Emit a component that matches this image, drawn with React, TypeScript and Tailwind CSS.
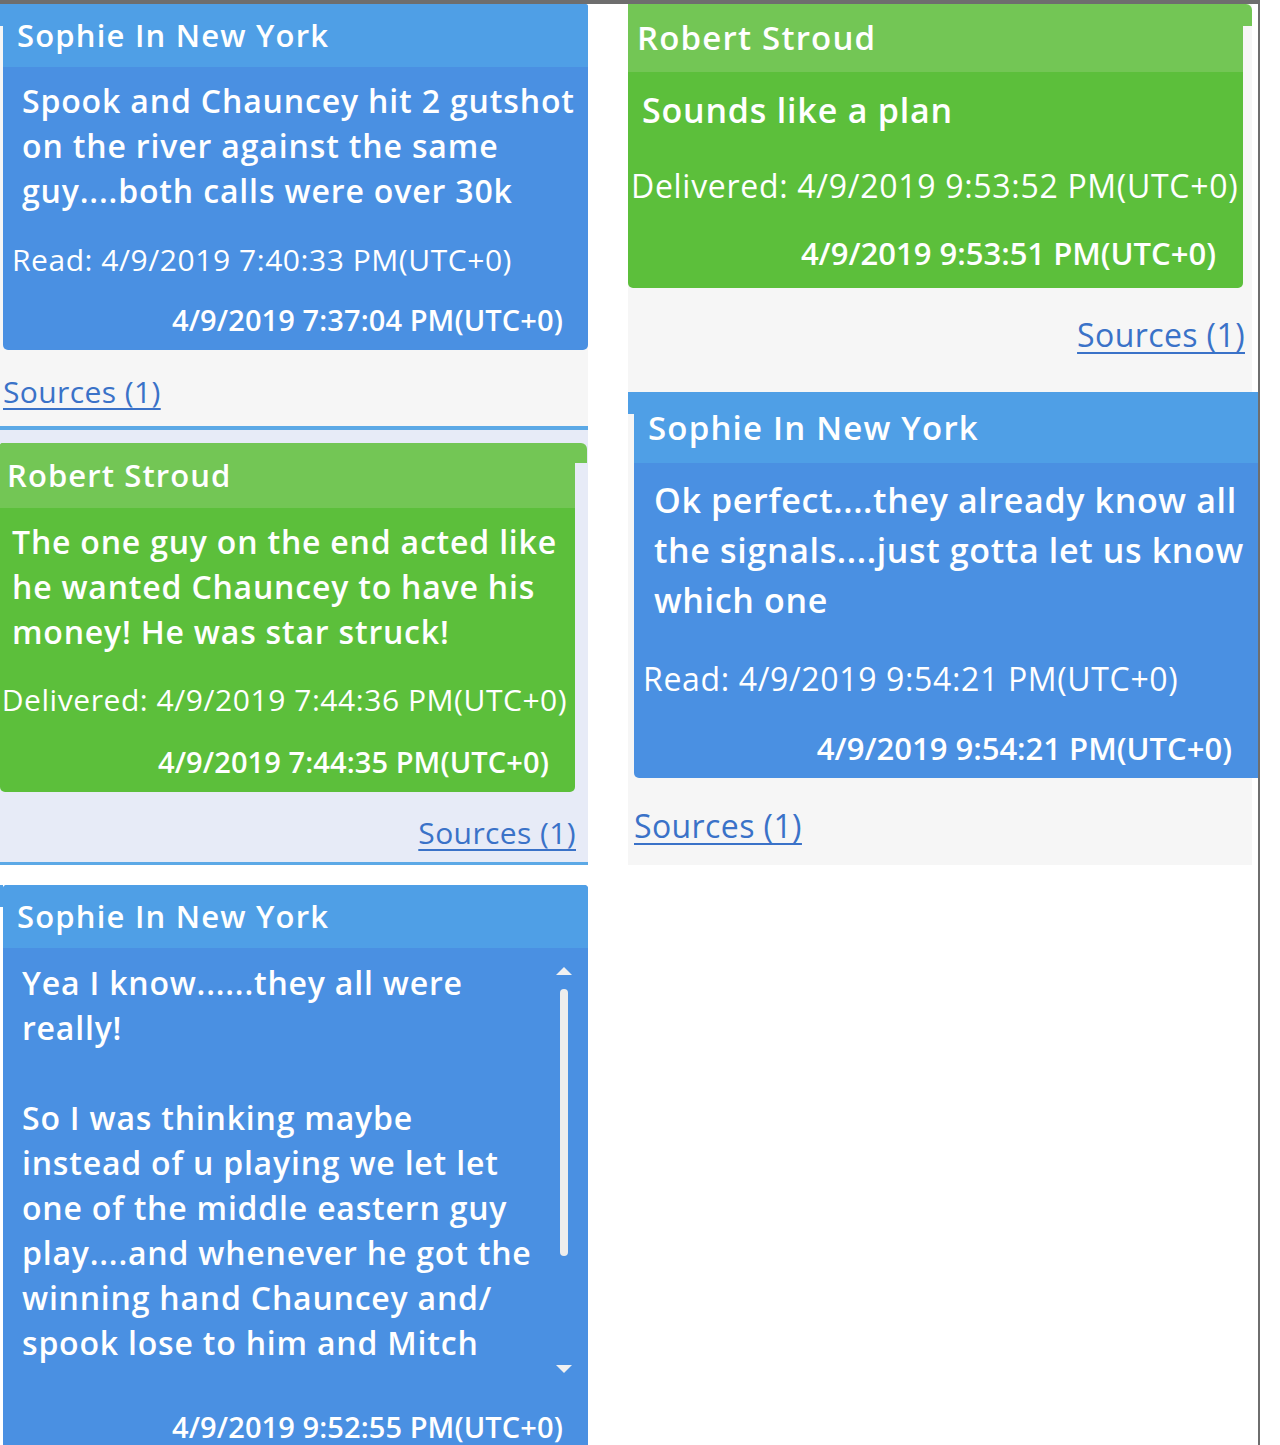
import React from "react";

const font = { fontFamily: "'Open Sans', 'Noto Sans', sans-serif" };

function Lines({ lines }: { lines: string[] }) {
  return (
    <>
      {lines.map((l, i) => (
        <div key={i} className="whitespace-nowrap">{l === "" ? "\u00a0" : l}</div>
      ))}
    </>
  );
}

function Sources({ className }: { className: string }) {
  return (
    <div className={className}>
      <span className="underline decoration-[2px] underline-offset-[5px] text-[#3a72c8]">Sources (1)</span>
    </div>
  );
}

function ScrollBar() {
  return (
    <div className="w-[16px] mr-[16px] flex flex-col items-center pt-[18px] pb-[14px]">
      <svg width="18" height="10" viewBox="0 0 18 10"><path d="M1 9 L9 1 L17 9 Z" fill="#f1f1f1" /></svg>
      <div className="mt-[13px] w-[8px] h-[267px] rounded-full bg-[#ededed]" />
      <div className="flex-1" />
      <svg width="18" height="10" viewBox="0 0 18 10"><path d="M1 1 L9 9 L17 1 Z" fill="#f1f1f1" /></svg>
    </div>
  );
}

export default function App() {
  return (
    <div className="w-[1260px] h-[1445px] bg-white border-t-4 border-r-2 border-[#6e6e6e] overflow-hidden text-white" style={font}>
      <div className="flex gap-[40px]">
        {/* Left column */}
        <div className="w-[588px] flex flex-col">
          {/* Row 1: incoming */}
          <div className="bg-[#f6f6f6] h-[422px] flex flex-col">
            <div className="flex">
              <div className="w-[3px] h-[22px] bg-[#4f9fe6]" />
              <div className="flex-1 rounded-b-[5px] rounded-tr-[3px] overflow-hidden bg-[#4a90e2] h-[346px] flex flex-col">
                <div className="h-[63px] bg-[#4f9fe6] pl-[14px] flex items-center text-[31px] font-semibold tracking-[1.2px]">Sophie In New York</div>
                <div className="pl-[19px] pt-[11px] text-[32px] leading-[45px] font-semibold tracking-[0.85px]">
                  <Lines lines={["Spook and Chauncey hit 2 gutshot", "on the river against the same", "guy....both calls were over 30k"]} />
                </div>
                <div className="pl-[9px] mt-[27px] whitespace-nowrap text-[30px] leading-[40px] tracking-[0.55px]">Read: 4/9/2019 7:40:33 PM(UTC+0)</div>
                <div className="pr-[25px] mt-[20px] text-right text-[29px] leading-[40px] font-semibold tracking-[0.1px]">4/9/2019 7:37:04 PM(UTC+0)</div>
              </div>
            </div>
            <Sources className="pl-[3px] mt-[21px] text-[30px] leading-[42px] tracking-[0.4px]" />
          </div>
          <div className="h-[4px] bg-[#5ca9e6]" />

          {/* Row 2: outgoing */}
          <div className="bg-[#e7ebf7] h-[432px] pt-[13px] flex flex-col">
            <div className="flex">
              <div className="w-[575px] rounded-b-[5px] rounded-tl-[3px] overflow-hidden bg-[#5cbf3b] h-[349px] flex flex-col">
                <div className="h-[65px] bg-[#73c655] pl-[7px] flex items-center text-[31px] font-semibold tracking-[1.1px]">Robert Stroud</div>
                <div className="pl-[12px] pt-[11px] text-[32px] leading-[45px] font-semibold tracking-[0.8px]">
                  <Lines lines={["The one guy on the end acted like", "he wanted Chauncey to have his", "money! He was star struck!"]} />
                </div>
                <div className="pr-[6px] mt-[26px] text-center whitespace-nowrap text-[30px] leading-[40px] tracking-[0.55px]">Delivered: 4/9/2019 7:44:36 PM(UTC+0)</div>
                <div className="pr-[26px] mt-[22px] text-right text-[29px] leading-[40px] font-semibold tracking-[0.1px]">4/9/2019 7:44:35 PM(UTC+0)</div>
              </div>
              <div className="w-[12px] h-[20px] bg-[#73c655] rounded-tr-[6px]" />
            </div>
            <Sources className="w-[576px] text-right mt-[20px] text-[30px] leading-[42px] tracking-[0.4px]" />
          </div>
          <div className="h-[3px] bg-[#5ca9e6]" />

          {/* Row 3: incoming, scrolling */}
          <div className="pt-[20px]">
            <div className="flex">
              <div className="w-[3px] h-[22px] bg-[#4f9fe6]" />
              <div className="flex-1 rounded-t-[4px] overflow-hidden bg-[#4a90e2] h-[600px] flex flex-col">
                <div className="h-[63px] bg-[#4f9fe6] pl-[14px] flex items-center text-[31px] font-semibold tracking-[1.2px]">Sophie In New York</div>
                <div className="flex h-[440px]">
                  <div className="flex-1 pl-[19px] pt-[12px] text-[32px] leading-[45px] font-semibold tracking-[0.8px]">
                    <Lines
                      lines={[
                        "Yea I know......they all were",
                        "really!",
                        "",
                        "So I was thinking maybe",
                        "instead of u playing we let let",
                        "one of the middle eastern guy",
                        "play....and whenever he got the",
                        "winning hand Chauncey and/",
                        "spook lose to him and Mitch",
                      ]}
                    />
                  </div>
                  <ScrollBar />
                </div>
                <div className="pr-[25px] mt-[19px] text-right text-[29px] leading-[40px] font-semibold tracking-[0.1px]">4/9/2019 9:52:55 PM(UTC+0)</div>
              </div>
            </div>
          </div>
        </div>

        {/* Right column */}
        <div className="w-[630px] flex flex-col">
          {/* Row 1: outgoing */}
          <div className="bg-[#f6f6f6] h-[388px] mr-[6px] flex flex-col">
            <div className="flex">
              <div className="w-[617px] rounded-b-[5px] overflow-hidden bg-[#5cbf3b] h-[284px] flex flex-col">
                <div className="h-[68px] bg-[#73c655] pl-[9px] flex items-center text-[33px] font-semibold tracking-[1.2px]">Robert Stroud</div>
                <div className="pl-[14px] pt-[14px] text-[34px] leading-[48px] font-semibold tracking-[0.8px]">Sounds like a plan</div>
                <div className="pl-[3px] mt-[31px] whitespace-nowrap text-[32px] leading-[42px] tracking-[0.7px]">Delivered: 4/9/2019 9:53:52 PM(UTC+0)</div>
                <div className="pr-[27px] mt-[25px] text-right text-[31px] leading-[42px] font-semibold">4/9/2019 9:53:51 PM(UTC+0)</div>
              </div>
              <div className="w-[9px] h-[22px] bg-[#73c655] rounded-tr-[6px]" />
            </div>
            <Sources className="w-[617px] text-right mt-[25px] text-[32px] leading-[44px] tracking-[0.4px]" />
          </div>

          {/* Row 2: incoming */}
          <div className="bg-[#f6f6f6] h-[473px] mr-[6px] flex flex-col">
            <div className="flex -mr-[6px]">
              <div className="w-[6px] h-[22px] bg-[#4f9fe6]" />
              <div className="flex-1 rounded-bl-[5px] overflow-hidden bg-[#4a90e2] h-[386px] flex flex-col">
                <div className="h-[71px] bg-[#4f9fe6] pl-[14px] flex items-center text-[33px] font-semibold tracking-[1.2px]">Sophie In New York</div>
                <div className="pl-[20px] pt-[12px] text-[34px] leading-[50px] font-semibold tracking-[0.65px]">
                  <Lines lines={["Ok perfect....they already know all", "the signals....just gotta let us know", "which one"]} />
                </div>
                <div className="pl-[9px] mt-[33px] whitespace-nowrap text-[32px] leading-[42px] tracking-[0.65px]">Read: 4/9/2019 9:54:21 PM(UTC+0)</div>
                <div className="pr-[26px] mt-[27px] text-right text-[31px] leading-[42px] font-semibold">4/9/2019 9:54:21 PM(UTC+0)</div>
              </div>
            </div>
            <Sources className="pl-[6px] mt-[26px] text-[32px] leading-[44px] tracking-[0.4px]" />
          </div>
        </div>
      </div>
    </div>
  );
}
